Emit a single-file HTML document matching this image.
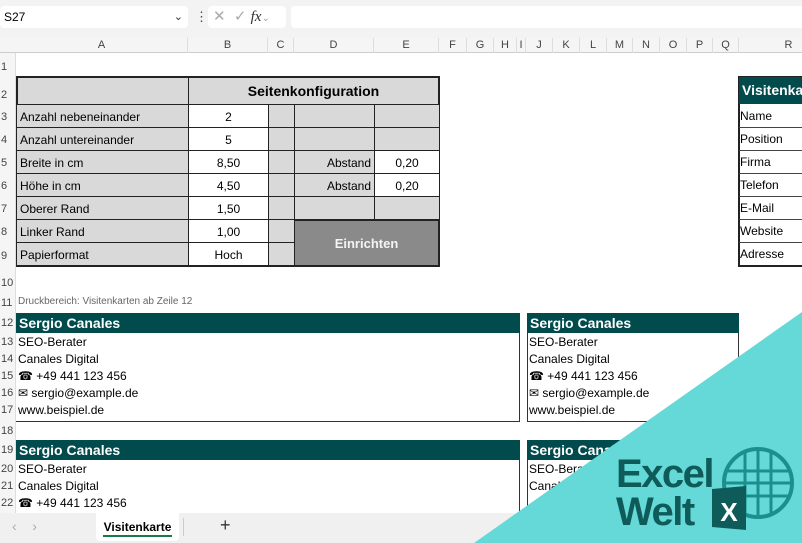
<!DOCTYPE html>
<html><head><meta charset="utf-8"><style>
*{margin:0;padding:0;box-sizing:border-box}
body{width:802px;height:543px;overflow:hidden;background:#fff;font-family:"Liberation Sans",Arial,sans-serif;position:relative;font-size:12px;color:#000}
.a{position:absolute}
.ch{position:absolute;top:38px;height:15px;font-size:11px;color:#444;text-align:center;line-height:15px;border-right:1px solid #ddd}
.rn{position:absolute;left:0;width:16px;font-size:11px;color:#444;text-align:left;padding-left:1px}
.c{position:absolute;border:1px solid #222;line-height:24px;padding:0 3px;white-space:nowrap;overflow:hidden}
.g{background:#d9d9d9}
.w{background:#fff}
.hd{position:absolute;background:#024b4d;color:#fff;font-weight:bold;font-size:14px;line-height:20px;padding-left:3px;white-space:nowrap;overflow:hidden}
.ln{position:absolute;font-size:12px;line-height:17px;white-space:nowrap}
</style></head><body>
<div class="a" style="left:0;top:0;width:802px;height:38px;background:#f3f3f3"></div>
<div class="a" style="left:0;top:6px;width:188px;height:22px;background:#fff;border-radius:4px;font-size:12px;line-height:22px;padding-left:4px">S27<span style="position:absolute;right:5px;top:0;color:#333;font-size:11px">&#8964;</span></div>
<div class="a" style="left:195px;top:9px;font-size:13px;color:#444">&#8942;</div>
<div class="a" style="left:208px;top:6px;width:78px;height:22px;background:#fff;border-radius:4px;color:#aaa;font-size:15px;line-height:22px;padding-left:5px">&#10005;&nbsp;&nbsp;&#10003;&nbsp;<i style="color:#333;font-family:'Liberation Serif',serif;font-size:15px">fx</i><span style="font-size:10px">&#8964;</span></div>
<div class="a" style="left:291px;top:6px;width:511px;height:22px;background:#fff;border-radius:4px 0 0 4px"></div>
<div class="a" style="left:0;top:38px;width:802px;height:15px;background:#f5f5f5;border-bottom:1px solid #ccc"></div>
<div class="ch" style="left:16px;width:172px">A</div>
<div class="ch" style="left:188px;width:80px">B</div>
<div class="ch" style="left:268px;width:26px">C</div>
<div class="ch" style="left:294px;width:80px">D</div>
<div class="ch" style="left:374px;width:65px">E</div>
<div class="ch" style="left:439px;width:28px">F</div>
<div class="ch" style="left:467px;width:27px">G</div>
<div class="ch" style="left:494px;width:23px">H</div>
<div class="ch" style="left:517px;width:9px">I</div>
<div class="ch" style="left:526px;width:27px">J</div>
<div class="ch" style="left:553px;width:27px">K</div>
<div class="ch" style="left:580px;width:27px">L</div>
<div class="ch" style="left:607px;width:26px">M</div>
<div class="ch" style="left:633px;width:27px">N</div>
<div class="ch" style="left:660px;width:27px">O</div>
<div class="ch" style="left:687px;width:26px">P</div>
<div class="ch" style="left:713px;width:26px">Q</div>
<div class="ch" style="left:739px;width:100px">R</div>
<div class="a" style="left:0;top:53px;width:16px;height:460px;background:#f5f5f5;border-right:1px solid #ddd"></div>
<div class="rn" style="top:61px">1</div>
<div class="rn" style="top:89px">2</div>
<div class="rn" style="top:111px">3</div>
<div class="rn" style="top:134px">4</div>
<div class="rn" style="top:157px">5</div>
<div class="rn" style="top:180px">6</div>
<div class="rn" style="top:203px">7</div>
<div class="rn" style="top:226px">8</div>
<div class="rn" style="top:250px">9</div>
<div class="rn" style="top:277px">10</div>
<div class="rn" style="top:297px">11</div>
<div class="rn" style="top:317px">12</div>
<div class="rn" style="top:336px">13</div>
<div class="rn" style="top:353px">14</div>
<div class="rn" style="top:370px">15</div>
<div class="rn" style="top:387px">16</div>
<div class="rn" style="top:404px">17</div>
<div class="rn" style="top:425px">18</div>
<div class="rn" style="top:444px">19</div>
<div class="rn" style="top:463px">20</div>
<div class="rn" style="top:480px">21</div>
<div class="rn" style="top:497px">22</div>
<div class="a" style="left:16px;top:76px;width:424px;height:191px;border:2px solid #222;background:#d9d9d9"></div>
<div class="c g" style="left:16px;top:76px;width:173px;height:29px;border-width:2px 1px 1px 2px"></div>
<div class="c g" style="left:188px;top:76px;width:252px;height:29px;border-width:2px 2px 1px 1px;text-align:center;font-weight:bold;font-size:14px;line-height:27px">Seitenkonfiguration</div>
<div class="c g" style="left:16px;top:104px;width:173px;height:24px">Anzahl nebeneinander</div>
<div class="c w" style="left:188px;top:104px;width:81px;height:24px;text-align:center">2</div>
<div class="c g" style="left:268px;top:104px;width:27px;height:24px"></div>
<div class="c g" style="left:294px;top:104px;width:81px;height:24px"></div>
<div class="c g" style="left:374px;top:104px;width:66px;height:24px"></div>
<div class="c g" style="left:16px;top:127px;width:173px;height:24px">Anzahl untereinander</div>
<div class="c w" style="left:188px;top:127px;width:81px;height:24px;text-align:center">5</div>
<div class="c g" style="left:268px;top:127px;width:27px;height:24px"></div>
<div class="c g" style="left:294px;top:127px;width:81px;height:24px"></div>
<div class="c g" style="left:374px;top:127px;width:66px;height:24px"></div>
<div class="c g" style="left:16px;top:150px;width:173px;height:24px">Breite in cm</div>
<div class="c w" style="left:188px;top:150px;width:81px;height:24px;text-align:center">8,50</div>
<div class="c g" style="left:268px;top:150px;width:27px;height:24px"></div>
<div class="c g" style="left:294px;top:150px;width:81px;height:24px;text-align:right">Abstand</div>
<div class="c w" style="left:374px;top:150px;width:66px;height:24px;text-align:center">0,20</div>
<div class="c g" style="left:16px;top:173px;width:173px;height:24px">Höhe in cm</div>
<div class="c w" style="left:188px;top:173px;width:81px;height:24px;text-align:center">4,50</div>
<div class="c g" style="left:268px;top:173px;width:27px;height:24px"></div>
<div class="c g" style="left:294px;top:173px;width:81px;height:24px;text-align:right">Abstand</div>
<div class="c w" style="left:374px;top:173px;width:66px;height:24px;text-align:center">0,20</div>
<div class="c g" style="left:16px;top:196px;width:173px;height:24px">Oberer Rand</div>
<div class="c w" style="left:188px;top:196px;width:81px;height:24px;text-align:center">1,50</div>
<div class="c g" style="left:268px;top:196px;width:27px;height:24px"></div>
<div class="c g" style="left:294px;top:196px;width:81px;height:24px"></div>
<div class="c g" style="left:374px;top:196px;width:66px;height:24px"></div>
<div class="c g" style="left:16px;top:219px;width:173px;height:24px">Linker Rand</div>
<div class="c w" style="left:188px;top:219px;width:81px;height:24px;text-align:center">1,00</div>
<div class="c g" style="left:268px;top:219px;width:27px;height:24px"></div>
<div class="c g" style="left:16px;top:242px;width:173px;height:25px;border-bottom-width:2px">Papierformat</div>
<div class="c w" style="left:188px;top:242px;width:81px;height:25px;text-align:center;border-bottom-width:2px">Hoch</div>
<div class="c g" style="left:268px;top:242px;width:27px;height:25px;border-bottom-width:2px"></div>
<div class="a" style="left:294px;top:219px;width:146px;height:48px;background:#8a8a8a;border:2px solid #222;border-left-width:1px;color:#f4f4f4;font-weight:bold;font-size:13px;text-align:center;line-height:46px">Einrichten</div>
<div class="a" style="left:738px;top:76px;width:70px;height:191px;border:2px solid #222;background:#fff"></div>
<div class="hd" style="left:739px;top:77px;width:70px;height:27px;line-height:27px;font-size:14px">Visitenkarte</div>
<div class="a" style="left:740px;top:105px;font-size:12px;line-height:23px">Name<br>Position<br>Firma<br>Telefon<br>E-Mail<br>Website<br>Adresse</div>
<div class="a" style="left:739px;top:127px;width:70px;border-top:1px solid #444"></div>
<div class="a" style="left:739px;top:150px;width:70px;border-top:1px solid #444"></div>
<div class="a" style="left:739px;top:173px;width:70px;border-top:1px solid #444"></div>
<div class="a" style="left:739px;top:196px;width:70px;border-top:1px solid #444"></div>
<div class="a" style="left:739px;top:219px;width:70px;border-top:1px solid #444"></div>
<div class="a" style="left:739px;top:242px;width:70px;border-top:1px solid #444"></div>
<div class="a" style="left:18px;top:296px;font-size:10px;color:#666">Druckbereich: Visitenkarten ab Zeile 12</div>
<div class="a" style="left:16px;top:313px;width:504px;height:109px;border:1px solid #333;border-left:none"></div>
<div class="hd" style="left:16px;top:313px;width:504px;height:20px">Sergio Canales</div>
<div class="ln" style="left:18px;top:334px">SEO-Berater<br>Canales Digital<br>&#9742; +49 441 123 456<br>&#9993; sergio@example.de<br>www.beispiel.de</div>
<div class="a" style="left:527px;top:313px;width:212px;height:109px;border:1px solid #333"></div>
<div class="hd" style="left:527px;top:313px;width:212px;height:20px">Sergio Canales</div>
<div class="ln" style="left:529px;top:334px">SEO-Berater<br>Canales Digital<br>&#9742; +49 441 123 456<br>&#9993; sergio@example.de<br>www.beispiel.de</div>
<div class="a" style="left:16px;top:440px;width:504px;height:80px;border:1px solid #333;border-left:none"></div>
<div class="hd" style="left:16px;top:440px;width:504px;height:20px">Sergio Canales</div>
<div class="ln" style="left:18px;top:461px">SEO-Berater<br>Canales Digital<br>&#9742; +49 441 123 456</div>
<div class="a" style="left:527px;top:440px;width:212px;height:80px;border:1px solid #333"></div>
<div class="hd" style="left:527px;top:440px;width:212px;height:20px">Sergio Canales</div>
<div class="ln" style="left:529px;top:461px">SEO-Berater<br>Canales Digital</div>
<div class="a" style="left:0;top:513px;width:802px;height:30px;background:#f0f0f0"></div>
<div class="a" style="left:12px;top:518px;color:#aaa;font-size:14px">&#8249;&nbsp;&nbsp;&nbsp;&nbsp;&#8250;</div>
<div class="a" style="left:96px;top:513px;width:83px;height:28px;background:#fff;border-radius:0 0 4px 4px;font-weight:bold;font-size:12px;text-align:center;line-height:28px">Visitenkarte</div>
<div class="a" style="left:103px;top:535px;width:69px;height:2px;background:#1a7a45"></div>
<div class="a" style="left:183px;top:518px;width:1px;height:18px;background:#ccc"></div>
<div class="a" style="left:220px;top:515px;font-size:18px;color:#333">+</div>
<svg class="a" style="left:0;top:0" width="802" height="543">
<polygon points="802,312 802,543 474,543" fill="#65d9d8"/>
<circle cx="758" cy="483" r="34" fill="none" stroke="#1b8f8c" stroke-width="4"/>
<g stroke="#1b8f8c" stroke-width="3" fill="none">
<line x1="726" y1="471" x2="790" y2="471"/><line x1="724" y1="483" x2="792" y2="483"/><line x1="726" y1="496" x2="790" y2="496"/>
<line x1="745" y1="452" x2="745" y2="514"/><line x1="758" y1="449" x2="758" y2="517"/><line x1="771" y1="452" x2="771" y2="514"/>
</g>
<polygon points="712,489 746,486 746,530 712,527" fill="#0e5b5a"/>
<text x="729" y="521" font-family="Liberation Sans" font-weight="bold" font-size="26" fill="#fff" text-anchor="middle">X</text>
<text x="616" y="487" font-family="Liberation Sans" font-weight="bold" font-size="40" fill="#0e5b5a" letter-spacing="-1.5">Excel</text>
<text x="616" y="525" font-family="Liberation Sans" font-weight="bold" font-size="40" fill="#0e5b5a" letter-spacing="-1.5">Welt</text>
</svg>
</body></html>
